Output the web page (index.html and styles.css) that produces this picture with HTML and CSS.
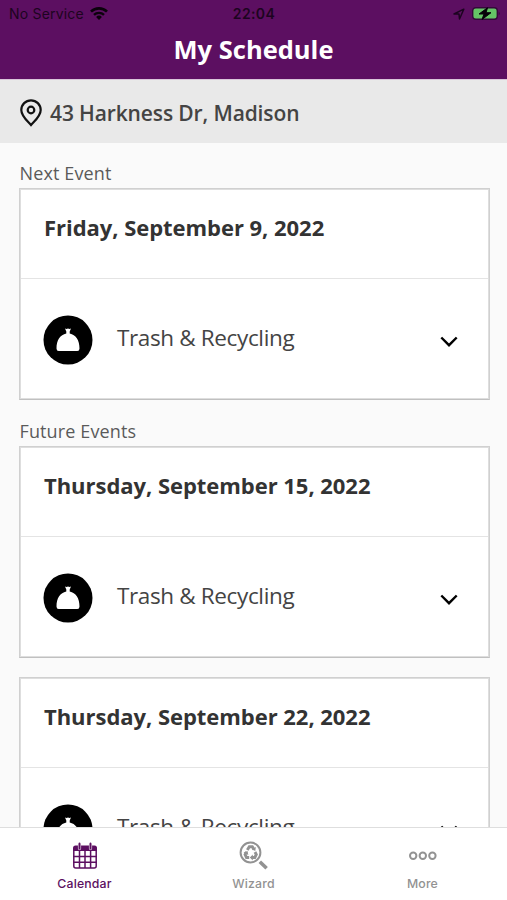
FILE: index.html
```html
<!DOCTYPE html>
<html lang="en">
<head>
<meta charset="utf-8">
<title>My Schedule</title>
<link rel="stylesheet" href="styles.css">
</head>
<body>
<svg class="defs" width="0" height="0" aria-hidden="true">
  <symbol id="bag" viewBox="0 0 50 50">
    <circle cx="25" cy="25" r="24.500" fill="#000"/>
    <path d="M22 13.500q1.500.8 3 0q1.500.8 3 0l-1.300 3v2c6 1.300 9.800 6.500 9.800 15q0 2.500-2.200 2.500H15.700q-2.200 0-2.200-2.500c0-8.500 3.800-13.700 9.800-15v-2z" fill="#fff"/>
  </symbol>
  <symbol id="chevron" viewBox="0 0 20 14">
    <path d="M2.300 2.500 10 10.200l7.700-7.700" fill="none" stroke="#000" stroke-width="2.400"/>
  </symbol>
</svg>
<div class="app">
  <header class="header">
    <div class="status">
      <div class="carrier"><span>No Service</span>
        <svg width="18" height="13" viewBox="0 0 18 13" fill="none" stroke="#0b020c"><path d="M1 4.600a11.500 11.500 0 0 1 16 0" stroke-width="2.700"/><path d="M4 7.900a7.200 7.200 0 0 1 10 0" stroke-width="2.400"/><path d="m9 13-2.900-3a4.200 4.200 0 0 1 5.800 0z" fill="#0b020c" stroke="none"/></svg>
      </div>
      <div class="clock">22:04</div>
      <div class="power">
        <svg width="12" height="12" viewBox="0 0 12 12"><path d="M1 6 10.800 1.200 6.500 11 6 6z" fill="none" stroke="#1c0420" stroke-width="1.500" stroke-linejoin="round"/></svg>
        <svg width="29" height="13" viewBox="0 0 29 13"><rect x=".7" y=".7" width="24.600" height="11.600" rx="3" fill="#65c466" stroke="#35083a" stroke-width="1.400"/><path d="M26.700 4.500q2 2 0 4z" fill="#35083a"/><path d="M15.500.8 7 7h5l-2 5.500L19 5.700h-5z" fill="#08020a" stroke="#08020a"/></svg>
      </div>
    </div>
    <h1>My Schedule</h1>
  </header>
  <div class="address">
    <svg width="22" height="28" viewBox="0 0 22 28" fill="none" stroke="#111" stroke-width="2.200"><path d="M11 26C8 22.500 1.300 17.500 1.300 11a9.700 9.700 0 0 1 19.400 0C20.700 17.500 14 22.500 11 26z"/><circle cx="11" cy="11" r="3.300"/></svg>
    <span>43 Harkness Dr, Madison</span>
  </div>
  <main class="list">
    <h2>Next Event</h2>
    <section class="card">
      <h3>Friday, September 9, 2022</h3>
      <div class="event"><svg class="bag"><use href="#bag"/></svg><span>Trash &amp; Recycling</span><svg class="chevron"><use href="#chevron"/></svg></div>
    </section>
    <h2>Future Events</h2>
    <section class="card">
      <h3>Thursday, September 15, 2022</h3>
      <div class="event"><svg class="bag"><use href="#bag"/></svg><span>Trash &amp; Recycling</span><svg class="chevron"><use href="#chevron"/></svg></div>
    </section>
    <section class="card">
      <h3>Thursday, September 22, 2022</h3>
      <div class="event"><svg class="bag"><use href="#bag"/></svg><span>Trash &amp; Recycling</span><svg class="chevron"><use href="#chevron"/></svg></div>
    </section>
  </main>
  <nav class="tabs">
    <div class="tab active">
      <svg width="26" height="28" viewBox="0 0 26 28"><path d="M1 9V6Q1 3.500 3.500 3.500h19Q25 3.500 25 6v3z" fill="currentColor"/><path d="M1.800 8v16q0 2 2 2h18.400q2 0 2-2V8M1 14.500h24M1 20.300h24M7.500 9v17M13 9v17M18.600 9v17" fill="none" stroke="currentColor" stroke-width="1.500"/><path d="M7.500 2.500v4M18.500 2.500v4" stroke="#dccbdd" stroke-width="3.200" stroke-linecap="round"/><path d="M7.500 1.500v5M18.500 1.500v5" stroke="currentColor" stroke-width="1.800" stroke-linecap="round"/></svg>
      <span>Calendar</span>
    </div>
    <div class="tab">
      <svg width="30" height="30" viewBox="0 0 30 30" fill="none" stroke="currentColor"><circle cx="11.500" cy="11.500" r="9.900" stroke-width="2"/><path d="m20.800 20.800 6.800 6.500" stroke-width="3.600"/><g stroke-width="2.900"><path d="m8.300 9 2-3.200h3l1.700 2.600"/><path d="m16 11 1.300 2.500-1.500 3h-3.300"/><path d="M10.200 16.500H7.500l-1.400-3L7.500 11"/></g><path d="m16.800 6-.5 4-3.400-1.600zM13.800 13.500v6l-3-3zM4.500 11.500l4-1.600.8 4z" fill="currentColor" stroke="none"/></svg>
      <span>Wizard</span>
    </div>
    <div class="tab">
      <svg width="30" height="30" viewBox="0 0 30 30" fill="none" stroke="currentColor" stroke-width="2"><circle cx="5.200" cy="14.800" r="3.200"/><circle cx="14.800" cy="14.800" r="3.200"/><circle cx="24.400" cy="14.800" r="3.200"/></svg>
      <span>More</span>
    </div>
  </nav>
</div>
</body>
</html>
```
FILE: styles.css
```css
* { box-sizing: border-box; }
body { margin: 0; font-family: "Open Sans", sans-serif; background: #fafafa; color: #333; }
h1, h2, h3 { margin: 0; }
svg { display: block; flex: none; }
.defs { position: absolute; }
.app { height: 900px; display: flex; flex-direction: column; overflow: hidden; }
.header { flex: none; height: 79px; background: #5c0f61; }
.status { height: 27px; padding: 0 8px 0 9px; display: grid; grid-template-columns: 1fr auto 1fr; align-items: center; font-family: Inter, sans-serif; font-size: 14px; line-height: 20px; color: #1c0420; }
.carrier { display: flex; align-items: center; gap: 6px; letter-spacing: 0.2px; }
.clock { font-weight: 600; letter-spacing: 0.4px; }
.power { display: flex; justify-content: flex-end; align-items: center; gap: 7px; margin-right: -2px; }
h1 { color: #fff; text-align: center; font-size: 25.500px; line-height: 45px; font-weight: 700; }
.address { flex: none; height: 64px; border-top: 1px solid #d9c5da; background: #e9e9e9; display: flex; align-items: center; gap: 8px; padding: 2px 20px 0; font-size: 21px; font-weight: 600; letter-spacing: -0.13px; color: #444; }
.list { flex: 1; min-height: 0; overflow: hidden; padding: 16px 17px 0 19px; }
h2 { height: 29px; padding-left: 0.5px; font-size: 18px; line-height: 29px; font-weight: 400; letter-spacing: 0.12px; color: #5a5a5a; }
.card { height: 212px; margin-bottom: 17px; background: #fff; border: 1px solid #d0d0d0; border-bottom-color: #c0c0c0; box-shadow: inset 0 0 0 1px #dedede; padding: 1px; }
.card + .card { margin-top: 19px; }
h3 { height: 89px; border-bottom: 1px solid #e4e4e4; padding: 0 23px; font-size: 22px; line-height: 75px; font-weight: 700; letter-spacing: -0.04px; color: #333; }
.event { height: 119px; padding: 2px 29px 0 22px; display: flex; align-items: center; font-size: 22.500px; letter-spacing: -0.36px; color: #444; }
.event span { flex: 1; margin-left: 24px; padding-bottom: 5px; }
.bag { width: 50px; height: 50px; }
.chevron { width: 20px; height: 14px; margin-top: 4px; }
.tabs { flex: none; height: 73px; background: #fff; border-top: 1px solid #dedede; display: grid; grid-template-columns: repeat(3, 1fr); }
.tab { display: flex; flex-direction: column; align-items: center; color: #929292; font: 500 12.300px/18px Inter, sans-serif; letter-spacing: 0.15px; }
.tab svg { height: 30px; margin: 13px 0 4px; }
.active { color: #5c0f61; }
```
